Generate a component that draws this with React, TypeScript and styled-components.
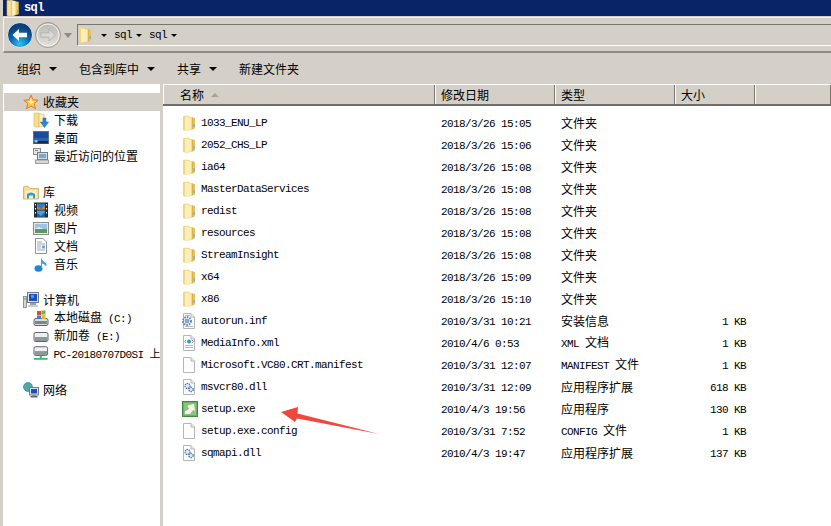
import React from "react";
import styled, { createGlobalStyle } from "styled-components";

const GlobalStyle = createGlobalStyle`
  html, body {
    margin: 0;
    padding: 0;
    background: #d4d0c8;
  }
  * {
    box-sizing: border-box;
  }
`;

const cjk = `"Noto Sans CJK SC", "Liberation Sans", sans-serif`;

// ---------- icons ----------

const FolderIcon = () => (
  <svg width="14" height="16" viewBox="0 0 14 16">
    <path d="M1 1.5 Q1 0.7 2 0.7 L7 0.7 L7 15.5 L2 15.5 Q1 15.5 1 14.5 Z" fill="#f3d67c" />
    <path d="M7 1.5 L12.8 3 Q13 3 13 4 L13 13.5 L7 15.5 Z" fill="#e9c25a" />
    <path d="M3 1.5 L9.8 2.4 L9.8 14.4 L3 15.5 Z" fill="#fbeeb8" />
    <path d="M9.8 2.4 L10.8 2.6 L10.8 14.2 L9.8 14.4 Z" fill="#d8ac46" />
    <rect x="11.6" y="9" width="1" height="3" fill="#4fb0de" />
  </svg>
);

const StarIcon = () => (
  <svg width="16" height="16" viewBox="0 0 16 16">
    <path d="M8 1 L10 5.8 L15.2 6.2 L11.2 9.5 L12.5 14.7 L8 12 L3.5 14.7 L4.8 9.5 L0.8 6.2 L6 5.8 Z" fill="#fcc94a" stroke="#e8792a" strokeWidth="1" />
    <path d="M8 4 L9 7 L12 7.5 L8 10 L5 7.5 L7 7 Z" fill="#fff0a8" />
  </svg>
);

const DownloadIcon = () => (
  <svg width="16" height="16" viewBox="0 0 16 16">
    <path d="M1 1 L6 1 L6 15 L2 15 L1 14 Z" fill="#f6df8f" stroke="#d9b95c" strokeWidth="0.6" />
    <path d="M6 1.5 L11 2.5 L11 14 L6 15 Z" fill="#fbeeb8" stroke="#d9b95c" strokeWidth="0.6" />
    <path d="M10 6 L13 6 L13 10 L15.5 10 L11.5 15.5 L7.5 10 L10 10 Z" fill="#2d86d8" stroke="#1b5ea6" strokeWidth="0.5" />
  </svg>
);

const DesktopIcon = () => (
  <svg width="16" height="16" viewBox="0 0 16 16">
    <rect x="0.5" y="1.5" width="15" height="12" fill="#2a62b4" stroke="#5f7186" />
    <rect x="1" y="2" width="14" height="6" fill="#1d4b96" />
    <rect x="1" y="11" width="14" height="2.5" fill="#1c2a3c" />
    <rect x="1.5" y="10" width="3" height="2.5" fill="#8bc1ee" />
  </svg>
);

const RecentIcon = () => (
  <svg width="16" height="16" viewBox="0 0 16 16">
    <rect x="0.5" y="0.5" width="7" height="6" fill="#e5e5e5" stroke="#8a8a8a" />
    <rect x="4.5" y="4.5" width="10" height="7" fill="#cfe0ea" stroke="#6e7f8c" />
    <rect x="6" y="6" width="7" height="4" fill="#7fa8c6" />
    <rect x="2.5" y="12" width="13" height="3.5" fill="#d8d8d8" stroke="#8a8a8a" strokeWidth="0.8" />
    <rect x="2" y="2" width="3" height="1" fill="#7d7d7d" />
  </svg>
);

const LibraryIcon = () => (
  <svg width="16" height="16" viewBox="0 0 16 16">
    <path d="M0.5 3 L0.5 15 L15.5 15 L15.5 4.5 L7 4.5 L5.5 2.5 L1 2.5 Z" fill="#f5dc90" stroke="#c8a95a" strokeWidth="0.8" />
    <path d="M2.5 6.5 H13.5 V14.5 H2.5 Z" fill="#fbf0c4" />
    <path d="M4 14.5 V10 Q8 7 12 10 V14.5 H10 V11.5 H6 V14.5 Z" fill="#2f9bd4" />
  </svg>
);

const VideoIcon = () => (
  <svg width="16" height="16" viewBox="0 0 16 16">
    <rect x="1" y="0.5" width="14" height="15" fill="#1f2d38" />
    <rect x="4" y="1.5" width="8" height="6" fill="#2f7dc4" />
    <rect x="4" y="8.5" width="8" height="6" fill="#4a9ee0" />
    <path d="M4 4 L8 7 L12 3 V7.5 H4 Z" fill="#d9762f" />
    <path d="M4 11 L8 14 L12 10 V14.5 H4 Z" fill="#2458a0" />
    <rect x="2" y="2" width="1" height="1.5" fill="#fff" />
    <rect x="2" y="6" width="1" height="1.5" fill="#fff" />
    <rect x="2" y="10" width="1" height="1.5" fill="#fff" />
    <rect x="13" y="2" width="1" height="1.5" fill="#fff" />
    <rect x="13" y="6" width="1" height="1.5" fill="#fff" />
    <rect x="13" y="10" width="1" height="1.5" fill="#fff" />
  </svg>
);

const PictureIcon = () => (
  <svg width="16" height="16" viewBox="0 0 16 16">
    <rect x="0.5" y="2.5" width="15" height="12" fill="#e8e8e8" stroke="#8c8c8c" />
    <rect x="2" y="4" width="12" height="5" fill="#9cc4e4" />
    <rect x="2" y="9" width="12" height="4" fill="#5c9a62" />
    <path d="M2 9 L6 7 L10 9 Z" fill="#e4efe0" />
  </svg>
);

const DocIcon = () => (
  <svg width="16" height="16" viewBox="0 0 16 16">
    <path d="M2.5 0.5 H10 L13.5 4 V15.5 H2.5 Z" fill="#fff" stroke="#909090" />
    <path d="M4 4 H9 M4 6 H12 M4 8 H8 M4 10 H8 M4 12 H12" stroke="#7f93ad" strokeWidth="0.8" />
    <rect x="9" y="7.5" width="3" height="3" fill="#6ea7d8" />
  </svg>
);

const MusicIcon = () => (
  <svg width="16" height="16" viewBox="0 0 16 16">
    <ellipse cx="5.5" cy="12.5" rx="4" ry="3.2" fill="#1f86d6" />
    <path d="M8 12 V1 Q9 5 13 7 Q14 9 13 10.5 Q12 8 9 7.5 V12 Z" fill="#3aa0e6" />
  </svg>
);

const ComputerIcon = () => (
  <svg width="16" height="16" viewBox="0 0 16 16">
    <rect x="0.5" y="4.5" width="3" height="11" fill="#d6d6d6" stroke="#7c7c7c" strokeWidth="0.8" />
    <rect x="1.5" y="6" width="1" height="2" fill="#3fae4a" />
    <rect x="4.5" y="0.5" width="11" height="10" fill="#dfe3e8" stroke="#6f7a88" />
    <rect x="6" y="2" width="8" height="7" fill="#1b4fc0" />
    <rect x="8" y="3" width="3" height="3" fill="#5c8ef0" />
    <rect x="7" y="11" width="6" height="2" fill="#9aa2ad" />
    <rect x="5" y="13" width="10" height="2" fill="#c7ccd2" />
  </svg>
);

const DiskBody = () => (
  <>
    <path d="M1 10 Q1 8.5 3 8.5 H13 Q15 8.5 15 10 V14 Q15 15.5 13 15.5 H3 Q1 15.5 1 14 Z" fill="#dcdcdc" stroke="#5f666d" />
    <rect x="2" y="11" width="12" height="3" fill="#7a8590" />
    <rect x="12" y="11.5" width="1.5" height="2" fill="#52c04e" />
  </>
);

const SystemDiskIcon = () => (
  <svg width="16" height="16" viewBox="0 0 16 16">
    <DiskBody />
    <rect x="4" y="1" width="4" height="4" fill="#e8452e" />
    <rect x="8.5" y="0.5" width="4" height="4" fill="#6cb33f" />
    <rect x="4" y="5.5" width="4" height="3.5" fill="#2f7ed8" />
    <rect x="8.5" y="5" width="4" height="4" fill="#f6b81f" />
  </svg>
);

const VolumeIcon = () => (
  <svg width="16" height="16" viewBox="0 0 16 16">
    <path d="M1 6 Q1 4.5 3 4.5 H13 Q15 4.5 15 6 V12 Q15 13.5 13 13.5 H3 Q1 13.5 1 12 Z" fill="#f0f0f0" stroke="#5f666d" />
    <rect x="1.5" y="9" width="13" height="4" fill="#8f979f" />
    <rect x="11.5" y="9.5" width="1.5" height="2" fill="#52c04e" />
  </svg>
);

const NetDriveIcon = () => (
  <svg width="16" height="16" viewBox="0 0 16 16">
    <path d="M1 2 Q1 0.5 3 0.5 H13 Q15 0.5 15 2 V8 Q15 9.5 13 9.5 H3 Q1 9.5 1 8 Z" fill="#f0f0f0" stroke="#5f666d" />
    <rect x="1.5" y="5" width="13" height="4" fill="#8f979f" />
    <rect x="11.5" y="5.5" width="1.5" height="2" fill="#52c04e" />
    <path d="M7 9.5 H9 V12 H15 V14 H1 V12 H7 Z" fill="#3db86a" />
  </svg>
);

const NetworkIcon = () => (
  <svg width="16" height="16" viewBox="0 0 16 16">
    <circle cx="5" cy="5" r="4.5" fill="#4aa3e0" stroke="#2a6fa8" strokeWidth="0.6" />
    <path d="M2 3 L5 2 L7 4 L5 7 L2 6 Z" fill="#58b848" />
    <rect x="6.5" y="5.5" width="9" height="7.5" fill="#dfe3e8" stroke="#6f7a88" />
    <rect x="8" y="7" width="6" height="4.5" fill="#1b4fc0" />
    <rect x="9" y="13" width="4" height="1" fill="#8f979f" />
    <rect x="7.5" y="14" width="7" height="1.5" fill="#5f666d" />
  </svg>
);

const BlankFileIcon = ({ children }: { children?: React.ReactNode }) => (
  <svg width="14" height="16" viewBox="0 0 14 16">
    <path d="M1.5 0.5 H9 L12.5 4 V15.5 H1.5 Z" fill="#fdfdfd" stroke="#b5b5b5" />
    <path d="M9 0.5 V4 H12.5" fill="#ececec" stroke="#b5b5b5" />
    {children}
  </svg>
);

const IniIcon = () => (
  <BlankFileIcon>
    <path d="M3 2.5 H8 M3 13.5 H11" stroke="#9aa8b8" strokeWidth="0.8" />
    <circle cx="5" cy="8" r="4" fill="none" stroke="#5b7fb0" strokeWidth="1.8" strokeDasharray="1.6 1" />
    <circle cx="5" cy="8" r="2" fill="#8fb0d8" stroke="#4f6f9c" strokeWidth="0.6" />
  </BlankFileIcon>
);

const XmlIcon = () => (
  <BlankFileIcon>
    <circle cx="7" cy="6.5" r="2" fill="#2b9bc4" />
    <path d="M4 5 L2.8 6.5 L4 8 M10 5 L11.2 6.5 L10 8" fill="none" stroke="#4a6a8a" strokeWidth="0.8" />
    <path d="M3 10.5 H11 M3 12.5 H11" stroke="#9aa8b8" strokeWidth="0.8" />
  </BlankFileIcon>
);

const DllIcon = () => (
  <BlankFileIcon>
    <circle cx="5.5" cy="7" r="2.6" fill="#d9e6f5" stroke="#3c68ac" strokeWidth="1.1" strokeDasharray="1.4 0.8" />
    <circle cx="9" cy="10.5" r="2.2" fill="#d9e6f5" stroke="#3c68ac" strokeWidth="1.1" strokeDasharray="1.4 0.8" />
  </BlankFileIcon>
);

const ExeIcon = () => (
  <svg width="16" height="16" viewBox="0 0 16 16">
    <rect x="0.5" y="0.5" width="15" height="15" fill="#6fae62" stroke="#3f8a3c" />
    <rect x="2" y="2" width="12" height="12" fill="#8ec282" />
    <path d="M12 3 L13 10 L11 9 L8 13 L3 13 L3 10.5 L7 8 L5.5 4.5 Z" fill="#f3f4ee" />
  </svg>
);

const TitleFolderIcon = () => (
  <svg width="14" height="16" viewBox="0 0 14 16">
    <path d="M1 0.5 L6 0 L6 16 L2 16 Q1 16 1 15 Z" fill="#f6df8f" stroke="#d9b95c" strokeWidth="0.6" />
    <path d="M6 1 L12.5 2 L12.5 14 L6 16 Z" fill="#efc95f" stroke="#d2a840" strokeWidth="0.6" />
    <path d="M6 0.5 L9.5 1 L9.5 15 L6 16 Z" fill="#fbeeb8" />
    <rect x="11" y="10" width="1.2" height="3" fill="#5db7df" />
  </svg>
);

const BackButtonIcon = () => (
  <svg width="26" height="26" viewBox="0 0 26 26">
    <defs>
      <radialGradient id="backFill" cx="50%" cy="85%" r="70%">
        <stop offset="0%" stopColor="#27c6f2" />
        <stop offset="55%" stopColor="#0b66b4" />
        <stop offset="100%" stopColor="#0b3f78" />
      </radialGradient>
    </defs>
    <circle cx="13" cy="13" r="12.5" fill="url(#backFill)" stroke="#e8e8e8" strokeWidth="1" />
    <path d="M5.5 13 L12 7 V10.8 H20 V15.2 H12 V19 Z" fill="#fff" />
  </svg>
);

const ForwardButtonIcon = () => (
  <svg width="26" height="26" viewBox="0 0 26 26">
    <defs>
      <linearGradient id="fwdFill" x1="0" y1="0" x2="0" y2="1">
        <stop offset="0%" stopColor="#b9b7b2" />
        <stop offset="100%" stopColor="#e4e3df" />
      </linearGradient>
    </defs>
    <circle cx="13" cy="13" r="12.5" fill="url(#fwdFill)" stroke="#9d9c98" strokeWidth="1" />
    <circle cx="13" cy="13" r="11" fill="none" stroke="#f2f2f0" strokeWidth="1" />
    <path d="M20.5 13 L14 7 V10.8 H6 V15.2 H14 V19 Z" fill="#d8d7d3" stroke="#a9a8a4" strokeWidth="0.7" />
  </svg>
);

const icons = {
  folder: FolderIcon,
  ini: IniIcon,
  xml: XmlIcon,
  blank: BlankFileIcon,
  dll: DllIcon,
  exe: ExeIcon,
};

// ---------- data ----------

type FileRow = {
  name: string;
  date: string;
  type: string;
  typeLatin?: string;
  size?: string;
  icon: keyof typeof icons;
};

const folder = (name: string, date: string): FileRow => ({ name, date, type: "文件夹", icon: "folder" });

const files: FileRow[] = [
  folder("1033_ENU_LP", "2018/3/26 15:05"),
  folder("2052_CHS_LP", "2018/3/26 15:06"),
  folder("ia64", "2018/3/26 15:08"),
  folder("MasterDataServices", "2018/3/26 15:08"),
  folder("redist", "2018/3/26 15:08"),
  folder("resources", "2018/3/26 15:08"),
  folder("StreamInsight", "2018/3/26 15:08"),
  folder("x64", "2018/3/26 15:09"),
  folder("x86", "2018/3/26 15:10"),
  { name: "autorun.inf", date: "2010/3/31 10:21", type: "安装信息", size: "1 KB", icon: "ini" },
  { name: "MediaInfo.xml", date: "2010/4/6 0:53", typeLatin: "XML ", type: "文档", size: "1 KB", icon: "xml" },
  { name: "Microsoft.VC80.CRT.manifest", date: "2010/3/31 12:07", typeLatin: "MANIFEST ", type: "文件", size: "1 KB", icon: "blank" },
  { name: "msvcr80.dll", date: "2010/3/31 12:09", type: "应用程序扩展", size: "618 KB", icon: "dll" },
  { name: "setup.exe", date: "2010/4/3 19:56", type: "应用程序", size: "130 KB", icon: "exe" },
  { name: "setup.exe.config", date: "2010/3/31 7:52", typeLatin: "CONFIG ", type: "文件", size: "1 KB", icon: "blank" },
  { name: "sqmapi.dll", date: "2010/4/3 19:47", type: "应用程序扩展", size: "137 KB", icon: "dll" },
];

type TreeItem = { icon: React.FC; label: string; latin?: string };
type TreeGroup = { icon: React.FC; label: string; active?: boolean; items: TreeItem[] };

const tree: TreeGroup[] = [
  {
    icon: StarIcon,
    label: "收藏夹",
    active: true,
    items: [
      { icon: DownloadIcon, label: "下载" },
      { icon: DesktopIcon, label: "桌面" },
      { icon: RecentIcon, label: "最近访问的位置" },
    ],
  },
  {
    icon: LibraryIcon,
    label: "库",
    items: [
      { icon: VideoIcon, label: "视频" },
      { icon: PictureIcon, label: "图片" },
      { icon: DocIcon, label: "文档" },
      { icon: MusicIcon, label: "音乐" },
    ],
  },
  {
    icon: ComputerIcon,
    label: "计算机",
    items: [
      { icon: SystemDiskIcon, label: "本地磁盘", latin: " (C:)" },
      { icon: VolumeIcon, label: "新加卷", latin: " (E:)" },
      { icon: NetDriveIcon, label: "", latin: "PC-20180707D0SI 上" },
    ],
  },
  { icon: NetworkIcon, label: "网络", items: [] },
];

const commands = [
  { label: "组织", menu: true },
  { label: "包含到库中", menu: true },
  { label: "共享", menu: true },
  { label: "新建文件夹", menu: false },
];

const columns = [
  { label: "名称", sorted: true },
  { label: "修改日期" },
  { label: "类型" },
  { label: "大小" },
  { label: "" },
];

// ---------- page ----------

export default function App() {
  return (
    <>
      <GlobalStyle />
      <Window>
        <TitleBar>
          <TitleFolderIcon />
          <TitleText>sql</TitleText>
        </TitleBar>

        <NavBar>
          <RoundButton>
            <BackButtonIcon />
          </RoundButton>
          <RoundButton>
            <ForwardButtonIcon />
          </RoundButton>
          <HistoryCaret />
          <AddressBox>
            <FolderIcon />
            <Caret $first />
            <Crumb>sql</Crumb>
            <Caret />
            <Crumb>sql</Crumb>
            <Caret />
          </AddressBox>
        </NavBar>

        <CommandBar>
          {commands.map((c) => (
            <Command key={c.label}>
              <span>{c.label}</span>
              {c.menu && <MenuCaret />}
            </Command>
          ))}
        </CommandBar>

        <Panes>
          <NavPane>
            {tree.map((group) => (
              <TreeSection key={group.label}>
                <TreeHead $active={group.active}>
                  <group.icon />
                  <span>{group.label}</span>
                </TreeHead>
                {group.items.map((item) => (
                  <TreeChild key={item.label + item.latin}>
                    <item.icon />
                    <span>
                      {item.label}
                      {item.latin && <Latin>{item.latin}</Latin>}
                    </span>
                  </TreeChild>
                ))}
              </TreeSection>
            ))}
          </NavPane>

          <FilePane>
            <HeaderRow>
              {columns.map((col, i) => (
                <HeaderCell key={i} $first={i === 0}>
                  {col.label}
                  {col.sorted && <SortArrow />}
                </HeaderCell>
              ))}
            </HeaderRow>
            <FileList>
              {files.map((f) => {
                const Icon = icons[f.icon];
                return (
                  <Row key={f.name}>
                    <NameCell>
                      <IconSlot>
                        <Icon />
                      </IconSlot>
                      <Latin>{f.name}</Latin>
                    </NameCell>
                    <Cell>
                      <Latin>{f.date}</Latin>
                    </Cell>
                    <Cell>
                      {f.typeLatin && <Latin>{f.typeLatin}</Latin>}
                      {f.type}
                    </Cell>
                    <SizeCell>
                      <Latin>{f.size}</Latin>
                    </SizeCell>
                  </Row>
                );
              })}
            </FileList>
          </FilePane>
        </Panes>

        <Annotation width="110" height="36" viewBox="0 0 110 36">
          <polygon points="1,8 18,3 17.5,9.5 99,30 17,14.5 15,18" fill="#f0483e" />
        </Annotation>
      </Window>
    </>
  );
}

const Window = styled.div`
  position: relative;
  width: 831px;
  height: 526px;
  overflow: hidden;
  display: flex;
  flex-direction: column;
  background: #d4d0c8;
  color: #000;
  font-family: ${cjk};
  font-size: 12px;
  line-height: 16px;
`;

const TitleBar = styled.div`
  height: 16px;
  margin-left: 3px;
  padding-left: 3px;
  display: flex;
  align-items: center;
  gap: 4px;
  background: #0a246a;
`;

const TitleText = styled.span`
  font-family: "Liberation Mono", monospace;
  font-size: 12px;
  font-weight: bold;
  letter-spacing: -0.6px;
  color: #fff;
`;

const NavBar = styled.div`
  height: 36px;
  margin: 1px 0 0 3px;
  padding: 0 0 0 3px;
  display: flex;
  align-items: center;
  border: 1px solid #f2f1ee;
  border-right: none;
  border-bottom: 2px solid #8e8c86;
  background: #d4d0c8;
`;

const RoundButton = styled.div`
  width: 26px;
  height: 26px;
  margin-right: 2px;
`;

const HistoryCaret = styled.div`
  width: 0;
  height: 0;
  margin: 2px 5px 0 1px;
  border-left: 4px solid transparent;
  border-right: 4px solid transparent;
  border-top: 5px solid #8d8b86;
`;

const AddressBox = styled.div`
  flex: 1;
  height: 22px;
  display: flex;
  align-items: center;
  border-left: 1px solid #77756f;
  border-top: 1px solid #77756f;
  border-bottom: 1px solid #fff;
  background: #d4d0c8;
`;

const Caret = styled.span<{ $first?: boolean }>`
  width: 0;
  height: 0;
  margin: 1px 7px 0 ${(p) => (p.$first ? "9px" : "4px")};
  border-left: 3px solid transparent;
  border-right: 3px solid transparent;
  border-top: 3px solid #000;
`;

const Crumb = styled.span`
  font-family: "Liberation Mono", monospace;
  font-size: 11px;
  letter-spacing: -0.6px;
`;

const CommandBar = styled.div`
  height: 31px;
  padding-left: 17px;
  display: flex;
  align-items: center;
  gap: 22px;
`;

const Command = styled.div`
  display: flex;
  align-items: center;
  gap: 8px;
`;

const MenuCaret = styled.span`
  width: 0;
  height: 0;
  border-left: 4px solid transparent;
  border-right: 4px solid transparent;
  border-top: 4px solid #000;
`;

const Panes = styled.div`
  flex: 1;
  min-height: 0;
  padding-left: 3px;
  display: flex;
  gap: 3px;
`;

const NavPane = styled.nav`
  width: 157px;
  padding-top: 9px;
  display: flex;
  flex-direction: column;
  gap: 18px;
  overflow: hidden;
  background: #fff;
`;

const TreeSection = styled.div`
  display: flex;
  flex-direction: column;
`;

const TreeHead = styled.div<{ $active?: boolean }>`
  height: 18px;
  margin-left: 1px;
  padding-left: 19px;
  display: flex;
  align-items: center;
  gap: 4px;
  white-space: nowrap;
  background: ${(p) => (p.$active ? "#d4d0c8" : "transparent")};
`;

const TreeChild = styled.div`
  height: 18px;
  padding-left: 30px;
  display: flex;
  align-items: center;
  gap: 5px;
  white-space: nowrap;
`;

const Latin = styled.span`
  font-family: "Liberation Mono", ${cjk};
  font-size: 11px;
  letter-spacing: -0.6px;
  white-space: pre;
`;

const FilePane = styled.main`
  flex: 1;
  min-width: 0;
  display: flex;
  flex-direction: column;
  background: #fff;
`;

const HeaderRow = styled.div`
  height: 22px;
  display: grid;
  grid-template-columns: 272px 120px 120px 80px 1fr;
  border-top: 1px solid #fff;
  border-bottom: 2px solid #6f6e6a;
`;

const HeaderCell = styled.div<{ $first?: boolean }>`
  padding-left: ${(p) => (p.$first ? "16px" : "5px")};
  display: flex;
  align-items: center;
  background: #d4d0c8;
  border-left: 1px solid #fff;
  border-right: 1px solid #77756f;
`;

const SortArrow = styled.span`
  width: 0;
  height: 0;
  margin-left: 7px;
  border-left: 4px solid transparent;
  border-right: 4px solid transparent;
  border-bottom: 4px solid #a5a39e;
`;

const FileList = styled.div`
  padding-top: 6px;
`;

const Row = styled.div`
  height: 22px;
  display: grid;
  grid-template-columns: 272px 120px 120px 80px;
  align-items: center;
`;

const Cell = styled.div`
  padding-left: 6px;
  white-space: nowrap;
`;

const NameCell = styled.div`
  padding-left: 19px;
  display: flex;
  align-items: center;
  white-space: nowrap;
`;

const IconSlot = styled.span`
  width: 19px;
  height: 16px;
  display: flex;
`;

const SizeCell = styled.div`
  padding-right: 9px;
  text-align: right;
`;

const Annotation = styled.svg`
  position: absolute;
  left: 280px;
  top: 404px;
`;
